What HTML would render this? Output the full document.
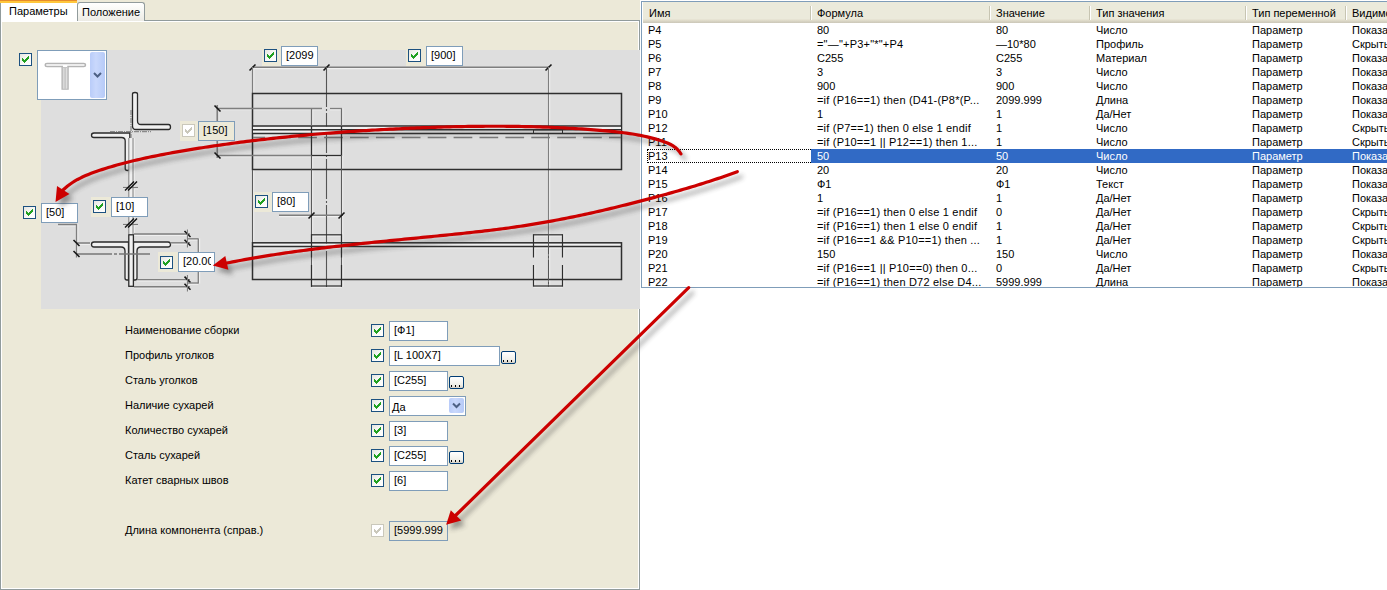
<!DOCTYPE html><html><head><meta charset="utf-8"><style>

html,body{margin:0;padding:0}
body{width:1387px;height:590px;position:relative;overflow:hidden;background:#fff;font-family:"Liberation Sans",sans-serif;font-size:11px;color:#000}
.a{position:absolute}
.t{position:absolute;white-space:nowrap;line-height:14px}
.tb{position:absolute;border:1px solid #7F9DB9;overflow:hidden}
.tb span{position:absolute;white-space:nowrap}

</style></head><body>
<div class="a" style="left:0;top:0;width:640px;height:590px;background:#ECE9D8"></div>
<div class="a" style="left:0;top:20px;width:638px;height:568px;border:1px solid #919B9C"></div>
<div class="a" style="left:1px;top:21px;width:636px;height:566px;border:1px solid #FFFFFF;border-top-color:#FFFFFF"></div>
<div class="a" style="left:77px;top:2px;width:66px;height:18px;border:1px solid #919B9C;border-bottom:none;border-radius:3px 3px 0 0;background:linear-gradient(#FFFFFF,#F6F6F2 50%,#ECEBE5)"></div>
<div class="t" style="left:82px;top:4px;line-height:16px">Положение</div>
<div class="a" style="left:0;top:0;width:77px;height:22px;background:#FFFFFF;border-left:1px solid #919B9C;box-sizing:border-box"></div>
<div class="a" style="left:0;top:0;width:77px;height:1px;background:#E68B2C"></div>
<div class="a" style="left:0;top:1px;width:77px;height:2px;background:#FFC73C"></div>
<div class="t" style="left:9px;top:3px;line-height:16px">Параметры</div>
<div class="a" style="left:41px;top:50px;width:599px;height:259px;background:#DEDEDE"></div>
<svg class="a" style="left:0;top:0" width="1387" height="590"><g opacity="0.75"><line x1="252" y1="68.6" x2="549" y2="68.6" stroke="#F6F6F6" stroke-width="1.2"/><line x1="253.7" y1="67" x2="253.7" y2="93" stroke="#F6F6F6" stroke-width="1.2"/><line x1="549.65" y1="67" x2="549.65" y2="287" stroke="#F6F6F6" stroke-width="1.2"/><line x1="252" y1="127.35" x2="622" y2="127.35" stroke="#F6F6F6" stroke-width="1.2"/><line x1="252" y1="131.15" x2="622" y2="131.15" stroke="#F6F6F6" stroke-width="1.2"/><line x1="252" y1="134.85" x2="622" y2="134.85" stroke="#F6F6F6" stroke-width="1.2"/><line x1="312.70000000000005" y1="108" x2="312.70000000000005" y2="126" stroke="#F6F6F6" stroke-width="1.2"/><line x1="342.70000000000005" y1="108" x2="342.70000000000005" y2="126" stroke="#F6F6F6" stroke-width="1.2"/><line x1="312.75" y1="126" x2="312.75" y2="156" stroke="#F6F6F6" stroke-width="1.2"/><line x1="342.75" y1="126" x2="342.75" y2="156" stroke="#F6F6F6" stroke-width="1.2"/><line x1="311" y1="156.75" x2="342" y2="156.75" stroke="#F6F6F6" stroke-width="1.2"/><line x1="217" y1="109.75" x2="322" y2="109.75" stroke="#F6F6F6" stroke-width="1.2"/><line x1="330" y1="109.75" x2="342" y2="109.75" stroke="#F6F6F6" stroke-width="1.2"/><line x1="217" y1="156.75" x2="311" y2="156.75" stroke="#F6F6F6" stroke-width="1.2"/><line x1="218.75" y1="105" x2="218.75" y2="158" stroke="#F6F6F6" stroke-width="1.2"/><line x1="312.65000000000003" y1="155" x2="312.65000000000003" y2="287" stroke="#F6F6F6" stroke-width="1.2"/><line x1="342.65000000000003" y1="155" x2="342.65000000000003" y2="287" stroke="#F6F6F6" stroke-width="1.2"/><line x1="253.65" y1="170" x2="253.65" y2="243" stroke="#F6F6F6" stroke-width="1.2"/><line x1="252" y1="247.85" x2="622" y2="247.85" stroke="#F6F6F6" stroke-width="1.2"/><line x1="311.5" y1="236.0" x2="341.5" y2="236.0" stroke="#F6F6F6" stroke-width="1.2"/><line x1="311.5" y1="287.20000000000005" x2="341.5" y2="287.20000000000005" stroke="#F6F6F6" stroke-width="1.2"/><line x1="312.70000000000005" y1="234.2" x2="312.70000000000005" y2="257.5" stroke="#F6F6F6" stroke-width="1.2"/><line x1="312.70000000000005" y1="265" x2="312.70000000000005" y2="286.6" stroke="#F6F6F6" stroke-width="1.2"/><line x1="342.70000000000005" y1="234.2" x2="342.70000000000005" y2="257.5" stroke="#F6F6F6" stroke-width="1.2"/><line x1="342.70000000000005" y1="265" x2="342.70000000000005" y2="286.6" stroke="#F6F6F6" stroke-width="1.2"/><line x1="533.5" y1="236.0" x2="562.5" y2="236.0" stroke="#F6F6F6" stroke-width="1.2"/><line x1="533.5" y1="287.20000000000005" x2="562.5" y2="287.20000000000005" stroke="#F6F6F6" stroke-width="1.2"/><line x1="534.7" y1="234.2" x2="534.7" y2="257.5" stroke="#F6F6F6" stroke-width="1.2"/><line x1="534.7" y1="265" x2="534.7" y2="286.6" stroke="#F6F6F6" stroke-width="1.2"/><line x1="563.7" y1="234.2" x2="563.7" y2="257.5" stroke="#F6F6F6" stroke-width="1.2"/><line x1="563.7" y1="265" x2="563.7" y2="286.6" stroke="#F6F6F6" stroke-width="1.2"/><line x1="279" y1="216.70000000000002" x2="343" y2="216.70000000000002" stroke="#F6F6F6" stroke-width="1.2"/><line x1="129.95000000000002" y1="138" x2="129.95000000000002" y2="234" stroke="#F6F6F6" stroke-width="1.2"/><line x1="134.15" y1="138" x2="134.15" y2="234" stroke="#F6F6F6" stroke-width="1.2"/><line x1="123" y1="188.7" x2="138" y2="188.7" stroke="#F6F6F6" stroke-width="1.2"/><line x1="123" y1="225.7" x2="138" y2="225.7" stroke="#F6F6F6" stroke-width="1.2"/><line x1="58" y1="225.85" x2="77" y2="225.85" stroke="#F6F6F6" stroke-width="1.2"/><line x1="77.75" y1="224" x2="77.75" y2="257.5" stroke="#F6F6F6" stroke-width="1.2"/><line x1="76" y1="244.35" x2="90" y2="244.35" stroke="#F6F6F6" stroke-width="1.2"/><line x1="134" y1="235.29999999999998" x2="190" y2="235.29999999999998" stroke="#F6F6F6" stroke-width="1.2"/><line x1="170" y1="244.1" x2="190" y2="244.1" stroke="#F6F6F6" stroke-width="1.2"/><line x1="137" y1="280.90000000000003" x2="190" y2="280.90000000000003" stroke="#F6F6F6" stroke-width="1.2"/><line x1="134" y1="288.0" x2="190" y2="288.0" stroke="#F6F6F6" stroke-width="1.2"/><line x1="187.5" y1="240.05" x2="198.3" y2="240.05" stroke="#F6F6F6" stroke-width="1.2"/><line x1="199.55" y1="238.5" x2="199.55" y2="283.5" stroke="#F6F6F6" stroke-width="1.2"/><line x1="187.5" y1="284.25" x2="198.3" y2="284.25" stroke="#F6F6F6" stroke-width="1.2"/><line x1="188.7" y1="229.5" x2="188.7" y2="247.5" stroke="#F6F6F6" stroke-width="1.2"/><line x1="188.7" y1="275" x2="188.7" y2="291.5" stroke="#F6F6F6" stroke-width="1.2"/></g><line x1="252" y1="67.2" x2="549" y2="67.2" stroke="#7E7E7E" stroke-width="1.6"/><line x1="249.5" y1="70.5" x2="255.5" y2="64.5" stroke="#151515" stroke-width="1.55"/><line x1="323.5" y1="70.5" x2="329.5" y2="64.5" stroke="#151515" stroke-width="1.55"/><line x1="545.5" y1="70.5" x2="551.5" y2="64.5" stroke="#151515" stroke-width="1.55"/><line x1="252.5" y1="67" x2="252.5" y2="93" stroke="#7E7E7E" stroke-width="1.2"/><line x1="548.5" y1="67" x2="548.5" y2="287" stroke="#7E7E7E" stroke-width="1.1"/><line x1="326.5" y1="67" x2="326.5" y2="287" stroke="#555" stroke-width="1.1" stroke-dasharray="40 2 2 2"/><rect x="252.5" y="93.5" width="369" height="76" stroke="#2E2E2E" stroke-width="1.5" fill="none"/><rect x="253" y="126.5" width="368" height="6.5" fill="#F2F2F2"/><line x1="252" y1="126" x2="622" y2="126" stroke="#2E2E2E" stroke-width="1.5"/><line x1="252" y1="129.8" x2="622" y2="129.8" stroke="#2E2E2E" stroke-width="1.5"/><line x1="252" y1="133.5" x2="622" y2="133.5" stroke="#2E2E2E" stroke-width="1.5"/><line x1="253" y1="137.5" x2="621" y2="137.5" stroke="#7A7A7A" stroke-width="1.5" stroke-dasharray="18.7 7.2" stroke-dashoffset="6.6"/><rect x="533.5" y="129.8" width="29" height="3.7" stroke="#2E2E2E" stroke-width="1" fill="none"/><line x1="311.5" y1="108" x2="311.5" y2="126" stroke="#6A6A6A" stroke-width="1.2"/><line x1="341.5" y1="108" x2="341.5" y2="126" stroke="#6A6A6A" stroke-width="1.2"/><line x1="311.5" y1="126" x2="311.5" y2="156" stroke="#2E2E2E" stroke-width="1.3"/><line x1="341.5" y1="126" x2="341.5" y2="156" stroke="#2E2E2E" stroke-width="1.3"/><line x1="311" y1="155.5" x2="342" y2="155.5" stroke="#2E2E2E" stroke-width="1.3"/><line x1="217" y1="108.5" x2="322" y2="108.5" stroke="#7E7E7E" stroke-width="1.3"/><line x1="330" y1="108.5" x2="342" y2="108.5" stroke="#7E7E7E" stroke-width="1.3"/><line x1="217" y1="155.5" x2="311" y2="155.5" stroke="#7E7E7E" stroke-width="1.3"/><line x1="217.3" y1="105" x2="217.3" y2="158" stroke="#7E7E7E" stroke-width="1.7"/><line x1="214.5" y1="105.5" x2="220.5" y2="111.5" stroke="#151515" stroke-width="1.55"/><line x1="214.5" y1="152.5" x2="220.5" y2="158.5" stroke="#151515" stroke-width="1.55"/><line x1="311.5" y1="155" x2="311.5" y2="287" stroke="#5A5A5A" stroke-width="1.1"/><line x1="341.5" y1="155" x2="341.5" y2="287" stroke="#5A5A5A" stroke-width="1.1"/><line x1="252.5" y1="170" x2="252.5" y2="243" stroke="#5A5A5A" stroke-width="1.1"/><rect x="253" y="243.5" width="368" height="2.5" fill="#F2F2F2"/><rect x="252.5" y="242.8" width="369" height="36.7" stroke="#2E2E2E" stroke-width="1.5" fill="none"/><line x1="252" y1="246.5" x2="622" y2="246.5" stroke="#2E2E2E" stroke-width="1.5"/><line x1="311.5" y1="234.8" x2="341.5" y2="234.8" stroke="#2E2E2E" stroke-width="1.2"/><line x1="311.5" y1="286" x2="341.5" y2="286" stroke="#2E2E2E" stroke-width="1.2"/><line x1="311.5" y1="234.2" x2="311.5" y2="257.5" stroke="#2E2E2E" stroke-width="1.2"/><line x1="311.5" y1="265" x2="311.5" y2="286.6" stroke="#2E2E2E" stroke-width="1.2"/><line x1="341.5" y1="234.2" x2="341.5" y2="257.5" stroke="#2E2E2E" stroke-width="1.2"/><line x1="341.5" y1="265" x2="341.5" y2="286.6" stroke="#2E2E2E" stroke-width="1.2"/><line x1="533.5" y1="234.8" x2="562.5" y2="234.8" stroke="#2E2E2E" stroke-width="1.2"/><line x1="533.5" y1="286" x2="562.5" y2="286" stroke="#2E2E2E" stroke-width="1.2"/><line x1="533.5" y1="234.2" x2="533.5" y2="257.5" stroke="#2E2E2E" stroke-width="1.2"/><line x1="533.5" y1="265" x2="533.5" y2="286.6" stroke="#2E2E2E" stroke-width="1.2"/><line x1="562.5" y1="234.2" x2="562.5" y2="257.5" stroke="#2E2E2E" stroke-width="1.2"/><line x1="562.5" y1="265" x2="562.5" y2="286.6" stroke="#2E2E2E" stroke-width="1.2"/><line x1="279" y1="215.3" x2="343" y2="215.3" stroke="#7E7E7E" stroke-width="1.6"/><line x1="308.5" y1="218.5" x2="314.5" y2="212.5" stroke="#151515" stroke-width="1.55"/><line x1="338.5" y1="218.5" x2="344.5" y2="212.5" stroke="#151515" stroke-width="1.55"/><line x1="548.5" y1="234" x2="548.5" y2="287" stroke="#555" stroke-width="1" stroke-dasharray="20 2 2 2"/><path d="M132.5 94 Q132.5 92.5 135 92.5 Q137.5 92.5 137.5 94 L137.5 121 Q137.5 124.5 141 124.5 L168.5 124.5 Q170.5 124.5 170.5 127 Q170.5 129.5 168.5 129.5 L136 129.5 Q132.5 129.5 132.5 126 Z" fill="#F0F0F0" stroke="#2A2A2A" stroke-width="1.3"/><path d="M129.8 133 L129.8 168.5 Q129.8 170.5 127.5 170.5 Q125.2 170.5 125.2 168.5 L125.2 141 Q125.2 137.5 121.5 137.5 L94 137.5 Q91.5 137.5 91.5 135.2 Q91.5 133 94 133 Z" fill="#F0F0F0" stroke="#2A2A2A" stroke-width="1.3"/><line x1="131" y1="110" x2="131" y2="138" stroke="#777" stroke-width="1" stroke-dasharray="5 1 1 1"/><line x1="110" y1="131.7" x2="151" y2="131.7" stroke="#777" stroke-width="1" stroke-dasharray="5 1 1 1"/><rect x="129" y="138" width="4" height="96" fill="#EFEFEF"/><line x1="128.8" y1="138" x2="128.8" y2="234" stroke="#8A8A8A" stroke-width="1.1"/><line x1="133" y1="138" x2="133" y2="234" stroke="#8A8A8A" stroke-width="1.1"/><line x1="123" y1="187.5" x2="138" y2="187.5" stroke="#7A7A7A" stroke-width="1.2"/><line x1="125" y1="190.5" x2="134" y2="181.5" stroke="#111" stroke-width="1.5"/><line x1="128" y1="190.5" x2="137" y2="181.5" stroke="#111" stroke-width="1.5"/><line x1="123" y1="224.5" x2="138" y2="224.5" stroke="#7A7A7A" stroke-width="1.2"/><line x1="125" y1="227.5" x2="134" y2="218.5" stroke="#111" stroke-width="1.5"/><line x1="128" y1="227.5" x2="137" y2="218.5" stroke="#111" stroke-width="1.5"/><path d="M128.5 242 L94 242 Q91.5 242 91.5 244.5 Q91.5 247 94 247 L121 247 Q125 247 125 251 L125 278 Q125 280 127 280 L128.5 280 Z" fill="#F0F0F0" stroke="#2A2A2A" stroke-width="1.3"/><path d="M133.5 242 L168 242 Q170.5 242 170.5 244.5 Q170.5 247 168 247 L141 247 Q137 247 137 251 L137 278 Q137 280 135 280 L133.5 280 Z" fill="#F0F0F0" stroke="#2A2A2A" stroke-width="1.3"/><rect x="128.8" y="234.8" width="4.6" height="51.5" fill="#F0F0F0" stroke="#2A2A2A" stroke-width="1.3"/><line x1="58" y1="224.5" x2="77" y2="224.5" stroke="#7E7E7E" stroke-width="1.5"/><line x1="76.5" y1="224" x2="76.5" y2="257.5" stroke="#7E7E7E" stroke-width="1.3"/><line x1="76" y1="243" x2="90" y2="243" stroke="#7E7E7E" stroke-width="1.5"/><line x1="76" y1="254" x2="150" y2="254" stroke="#777" stroke-width="1.4" stroke-dasharray="36 2 3 2"/><line x1="73.5" y1="240" x2="79.5" y2="246" stroke="#151515" stroke-width="1.55"/><line x1="73.5" y1="251" x2="79.5" y2="257" stroke="#151515" stroke-width="1.55"/><line x1="134" y1="234" x2="190" y2="234" stroke="#7E7E7E" stroke-width="1.4"/><line x1="170" y1="242.8" x2="190" y2="242.8" stroke="#7E7E7E" stroke-width="1.4"/><line x1="137" y1="279.6" x2="190" y2="279.6" stroke="#7E7E7E" stroke-width="1.4"/><line x1="134" y1="286.7" x2="190" y2="286.7" stroke="#7E7E7E" stroke-width="1.4"/><line x1="184.5" y1="231" x2="190.5" y2="237" stroke="#151515" stroke-width="1.55"/><line x1="184.5" y1="239.8" x2="190.5" y2="245.8" stroke="#151515" stroke-width="1.55"/><line x1="184.5" y1="276.6" x2="190.5" y2="282.6" stroke="#151515" stroke-width="1.55"/><line x1="184.5" y1="283.7" x2="190.5" y2="289.7" stroke="#151515" stroke-width="1.55"/><line x1="187.5" y1="238.8" x2="198.3" y2="238.8" stroke="#7E7E7E" stroke-width="1.3"/><line x1="198.3" y1="238.5" x2="198.3" y2="283.5" stroke="#7E7E7E" stroke-width="1.3"/><line x1="187.5" y1="283" x2="198.3" y2="283" stroke="#7E7E7E" stroke-width="1.3"/><line x1="187.5" y1="229.5" x2="187.5" y2="247.5" stroke="#7E7E7E" stroke-width="1.2"/><line x1="187.5" y1="275" x2="187.5" y2="291.5" stroke="#7E7E7E" stroke-width="1.2"/></svg>
<div class="a" style="left:37px;top:50px;width:68px;height:48px;border:1px solid #7F9DB9;background:#fff"></div>
<svg class="a" style="left:37px;top:50px" width="70" height="50"><path d="M10 13.6 Q8.2 13.6 8.2 15.1 Q8.2 16.6 10 16.6 L25.2 16.6 L25.2 39 L31 39 L31 16.6 L46.8 16.6 Q48.5 16.6 48.5 15.1 Q48.5 13.6 46.8 13.6 Z" fill="#FFFFFF" stroke="#B4B4B4" stroke-width="1.5"/><rect x="25.6" y="17" width="5" height="22" fill="#C6C6C6"/><line x1="26.8" y1="18" x2="26.8" y2="38.5" stroke="#E4E4E4" stroke-width="0.9"/><line x1="29.4" y1="18" x2="29.4" y2="38.5" stroke="#E4E4E4" stroke-width="0.9"/></svg>
<div style="position:absolute;left:90px;top:52px;width:15px;height:46px;border-radius:2px;background:linear-gradient(90deg,#B9CCF9,#C9D8FC 40%,#B6CAF7)"><svg width="15" height="46" style="position:absolute;left:0;top:0"><path d="M4.0 21.0 L7.5 24.5 L11.0 21.0" stroke="#4D6185" stroke-width="2" fill="none"/></svg></div>
<div style="position:absolute;left:19px;top:53px;width:11px;height:11px;border:1px solid #1C5180;background:linear-gradient(135deg,#E6E6E0 0%,#F8F8F6 50%,#FFFFFF 100%)"><svg width="11" height="11" style="position:absolute;left:0;top:0" shape-rendering="crispEdges"><path d="M8 2h1v1h-1zM7 3h2v1h-2zM2 4h1v1h-1zM6 4h3v1h-3zM2 5h2v1h-2zM5 5h3v1h-3zM2 6h5v1h-5zM3 7h3v1h-3zM4 8h1v1h-1z" fill="#21A121"/></svg></div>
<div style="position:absolute;left:262px;top:46px;width:19px;height:20px;background:#ECE9D8"></div><div style="position:absolute;left:264px;top:49px;width:11px;height:11px;border:1px solid #1C5180;background:linear-gradient(135deg,#E6E6E0 0%,#F8F8F6 50%,#FFFFFF 100%)"><svg width="11" height="11" style="position:absolute;left:0;top:0" shape-rendering="crispEdges"><path d="M8 2h1v1h-1zM7 3h2v1h-2zM2 4h1v1h-1zM6 4h3v1h-3zM2 5h2v1h-2zM5 5h3v1h-3zM2 6h5v1h-5zM3 7h3v1h-3zM4 8h1v1h-1z" fill="#21A121"/></svg></div>
<div class="tb" style="left:281px;top:46px;width:35px;height:18px;background:#FFFFFF"><div style="position:absolute;left:0;top:0;width:32px;height:18px;overflow:hidden"><span style="left:4px;top:-1px;line-height:18px">[2099</span></div></div>
<div style="position:absolute;left:406px;top:46px;width:20px;height:20px;background:#ECE9D8"></div><div style="position:absolute;left:408px;top:49px;width:11px;height:11px;border:1px solid #1C5180;background:linear-gradient(135deg,#E6E6E0 0%,#F8F8F6 50%,#FFFFFF 100%)"><svg width="11" height="11" style="position:absolute;left:0;top:0" shape-rendering="crispEdges"><path d="M8 2h1v1h-1zM7 3h2v1h-2zM2 4h1v1h-1zM6 4h3v1h-3zM2 5h2v1h-2zM5 5h3v1h-3zM2 6h5v1h-5zM3 7h3v1h-3zM4 8h1v1h-1z" fill="#21A121"/></svg></div>
<div class="tb" style="left:426px;top:46px;width:35px;height:18px;background:#FFFFFF"><div style="position:absolute;left:0;top:0;width:32px;height:18px;overflow:hidden"><span style="left:4px;top:-1px;line-height:18px">[900]</span></div></div>
<div style="position:absolute;left:180px;top:121px;width:18px;height:20px;background:#ECE9D8"></div><div style="position:absolute;left:182px;top:124px;width:11px;height:11px;border:1px solid #CAC8BB;background:#FFFFFF"><svg width="11" height="11" style="position:absolute;left:0;top:0" shape-rendering="crispEdges"><path d="M8 2h1v1h-1zM7 3h2v1h-2zM2 4h1v1h-1zM6 4h3v1h-3zM2 5h2v1h-2zM5 5h3v1h-3zM2 6h5v1h-5zM3 7h3v1h-3zM4 8h1v1h-1z" fill="#CAC8BB"/></svg></div>
<div class="tb" style="left:198px;top:121px;width:35px;height:18px;background:#ECE9D8"><div style="position:absolute;left:0;top:0;width:32px;height:18px;overflow:hidden"><span style="left:4px;top:-1px;line-height:18px">[150]</span></div></div>
<div style="position:absolute;left:23px;top:206px;width:11px;height:11px;border:1px solid #1C5180;background:linear-gradient(135deg,#E6E6E0 0%,#F8F8F6 50%,#FFFFFF 100%)"><svg width="11" height="11" style="position:absolute;left:0;top:0" shape-rendering="crispEdges"><path d="M8 2h1v1h-1zM7 3h2v1h-2zM2 4h1v1h-1zM6 4h3v1h-3zM2 5h2v1h-2zM5 5h3v1h-3zM2 6h5v1h-5zM3 7h3v1h-3zM4 8h1v1h-1z" fill="#21A121"/></svg></div>
<div class="tb" style="left:41px;top:203px;width:35px;height:18px;background:#FFFFFF"><div style="position:absolute;left:0;top:0;width:32px;height:18px;overflow:hidden"><span style="left:4px;top:-1px;line-height:18px">[50]</span></div></div>
<div style="position:absolute;left:91px;top:197px;width:20px;height:20px;background:#ECE9D8"></div><div style="position:absolute;left:93px;top:200px;width:11px;height:11px;border:1px solid #1C5180;background:linear-gradient(135deg,#E6E6E0 0%,#F8F8F6 50%,#FFFFFF 100%)"><svg width="11" height="11" style="position:absolute;left:0;top:0" shape-rendering="crispEdges"><path d="M8 2h1v1h-1zM7 3h2v1h-2zM2 4h1v1h-1zM6 4h3v1h-3zM2 5h2v1h-2zM5 5h3v1h-3zM2 6h5v1h-5zM3 7h3v1h-3zM4 8h1v1h-1z" fill="#21A121"/></svg></div>
<div class="tb" style="left:111px;top:197px;width:35px;height:18px;background:#FFFFFF"><div style="position:absolute;left:0;top:0;width:32px;height:18px;overflow:hidden"><span style="left:4px;top:-1px;line-height:18px">[10]</span></div></div>
<div style="position:absolute;left:254px;top:192px;width:18px;height:20px;background:#ECE9D8"></div><div style="position:absolute;left:255px;top:195px;width:11px;height:11px;border:1px solid #1C5180;background:linear-gradient(135deg,#E6E6E0 0%,#F8F8F6 50%,#FFFFFF 100%)"><svg width="11" height="11" style="position:absolute;left:0;top:0" shape-rendering="crispEdges"><path d="M8 2h1v1h-1zM7 3h2v1h-2zM2 4h1v1h-1zM6 4h3v1h-3zM2 5h2v1h-2zM5 5h3v1h-3zM2 6h5v1h-5zM3 7h3v1h-3zM4 8h1v1h-1z" fill="#21A121"/></svg></div>
<div class="tb" style="left:272px;top:192px;width:35px;height:18px;background:#FFFFFF"><div style="position:absolute;left:0;top:0;width:32px;height:18px;overflow:hidden"><span style="left:4px;top:-1px;line-height:18px">[80]</span></div></div>
<div style="position:absolute;left:158px;top:252px;width:20px;height:20px;background:#ECE9D8"></div><div style="position:absolute;left:160px;top:256px;width:11px;height:11px;border:1px solid #1C5180;background:linear-gradient(135deg,#E6E6E0 0%,#F8F8F6 50%,#FFFFFF 100%)"><svg width="11" height="11" style="position:absolute;left:0;top:0" shape-rendering="crispEdges"><path d="M8 2h1v1h-1zM7 3h2v1h-2zM2 4h1v1h-1zM6 4h3v1h-3zM2 5h2v1h-2zM5 5h3v1h-3zM2 6h5v1h-5zM3 7h3v1h-3zM4 8h1v1h-1z" fill="#21A121"/></svg></div>
<div class="tb" style="left:178px;top:252px;width:35px;height:18px;background:#FFFFFF"><div style="position:absolute;left:0;top:0;width:32px;height:18px;overflow:hidden"><span style="left:4px;top:-1px;line-height:18px">[20.00</span></div></div>
<div class="t" style="left:125px;top:323px">Наименование сборки</div>
<div style="position:absolute;left:371px;top:324px;width:11px;height:11px;border:1px solid #1C5180;background:linear-gradient(135deg,#E6E6E0 0%,#F8F8F6 50%,#FFFFFF 100%)"><svg width="11" height="11" style="position:absolute;left:0;top:0" shape-rendering="crispEdges"><path d="M8 2h1v1h-1zM7 3h2v1h-2zM2 4h1v1h-1zM6 4h3v1h-3zM2 5h2v1h-2zM5 5h3v1h-3zM2 6h5v1h-5zM3 7h3v1h-3zM4 8h1v1h-1z" fill="#21A121"/></svg></div>
<div class="tb" style="left:389px;top:321px;width:57px;height:18px;background:#FFFFFF"><div style="position:absolute;left:0;top:0;width:54px;height:18px;overflow:hidden"><span style="left:4px;top:-1px;line-height:18px">[Ф1]</span></div></div>
<div class="t" style="left:125px;top:348px">Профиль уголков</div>
<div style="position:absolute;left:371px;top:349px;width:11px;height:11px;border:1px solid #1C5180;background:linear-gradient(135deg,#E6E6E0 0%,#F8F8F6 50%,#FFFFFF 100%)"><svg width="11" height="11" style="position:absolute;left:0;top:0" shape-rendering="crispEdges"><path d="M8 2h1v1h-1zM7 3h2v1h-2zM2 4h1v1h-1zM6 4h3v1h-3zM2 5h2v1h-2zM5 5h3v1h-3zM2 6h5v1h-5zM3 7h3v1h-3zM4 8h1v1h-1z" fill="#21A121"/></svg></div>
<div class="tb" style="left:389px;top:346px;width:109px;height:18px;background:#FFFFFF"><div style="position:absolute;left:0;top:0;width:106px;height:18px;overflow:hidden"><span style="left:4px;top:-1px;line-height:18px">[L 100X7]</span></div></div>
<div style="position:absolute;left:501px;top:351px;width:13px;height:11px;border:1px solid #003C74;border-radius:2px;background:linear-gradient(#FFFFFF,#F0F0EA 70%,#D6D0C5)"><svg width="13" height="11" style="position:absolute;left:0;top:0" shape-rendering="crispEdges"><rect x="1" y="8" width="1" height="2" fill="#000"/><rect x="5" y="8" width="1" height="2" fill="#000"/><rect x="9" y="8" width="1" height="2" fill="#000"/></svg></div>
<div class="t" style="left:125px;top:373px">Сталь уголков</div>
<div style="position:absolute;left:371px;top:374px;width:11px;height:11px;border:1px solid #1C5180;background:linear-gradient(135deg,#E6E6E0 0%,#F8F8F6 50%,#FFFFFF 100%)"><svg width="11" height="11" style="position:absolute;left:0;top:0" shape-rendering="crispEdges"><path d="M8 2h1v1h-1zM7 3h2v1h-2zM2 4h1v1h-1zM6 4h3v1h-3zM2 5h2v1h-2zM5 5h3v1h-3zM2 6h5v1h-5zM3 7h3v1h-3zM4 8h1v1h-1z" fill="#21A121"/></svg></div>
<div class="tb" style="left:389px;top:371px;width:57px;height:18px;background:#FFFFFF"><div style="position:absolute;left:0;top:0;width:54px;height:18px;overflow:hidden"><span style="left:4px;top:-1px;line-height:18px">[C255]</span></div></div>
<div style="position:absolute;left:449px;top:376px;width:13px;height:11px;border:1px solid #003C74;border-radius:2px;background:linear-gradient(#FFFFFF,#F0F0EA 70%,#D6D0C5)"><svg width="13" height="11" style="position:absolute;left:0;top:0" shape-rendering="crispEdges"><rect x="1" y="8" width="1" height="2" fill="#000"/><rect x="5" y="8" width="1" height="2" fill="#000"/><rect x="9" y="8" width="1" height="2" fill="#000"/></svg></div>
<div class="t" style="left:125px;top:398px">Наличие сухарей</div>
<div style="position:absolute;left:371px;top:399px;width:11px;height:11px;border:1px solid #1C5180;background:linear-gradient(135deg,#E6E6E0 0%,#F8F8F6 50%,#FFFFFF 100%)"><svg width="11" height="11" style="position:absolute;left:0;top:0" shape-rendering="crispEdges"><path d="M8 2h1v1h-1zM7 3h2v1h-2zM2 4h1v1h-1zM6 4h3v1h-3zM2 5h2v1h-2zM5 5h3v1h-3zM2 6h5v1h-5zM3 7h3v1h-3zM4 8h1v1h-1z" fill="#21A121"/></svg></div>
<div class="tb" style="left:389px;top:396px;width:75px;height:18px;background:#fff"><span style="left:2px;top:1px;line-height:18px">Да</span></div>
<div style="position:absolute;left:449px;top:398px;width:15px;height:15px;border-radius:2px;background:linear-gradient(90deg,#B9CCF9,#C9D8FC 40%,#B6CAF7)"><svg width="15" height="15" style="position:absolute;left:0;top:0"><path d="M4.0 5.5 L7.5 9.0 L11.0 5.5" stroke="#4D6185" stroke-width="2" fill="none"/></svg></div>
<div class="t" style="left:125px;top:423px">Количество сухарей</div>
<div style="position:absolute;left:371px;top:424px;width:11px;height:11px;border:1px solid #1C5180;background:linear-gradient(135deg,#E6E6E0 0%,#F8F8F6 50%,#FFFFFF 100%)"><svg width="11" height="11" style="position:absolute;left:0;top:0" shape-rendering="crispEdges"><path d="M8 2h1v1h-1zM7 3h2v1h-2zM2 4h1v1h-1zM6 4h3v1h-3zM2 5h2v1h-2zM5 5h3v1h-3zM2 6h5v1h-5zM3 7h3v1h-3zM4 8h1v1h-1z" fill="#21A121"/></svg></div>
<div class="tb" style="left:389px;top:421px;width:57px;height:18px;background:#FFFFFF"><div style="position:absolute;left:0;top:0;width:54px;height:18px;overflow:hidden"><span style="left:4px;top:-1px;line-height:18px">[3]</span></div></div>
<div class="t" style="left:125px;top:448px">Сталь сухарей</div>
<div style="position:absolute;left:371px;top:449px;width:11px;height:11px;border:1px solid #1C5180;background:linear-gradient(135deg,#E6E6E0 0%,#F8F8F6 50%,#FFFFFF 100%)"><svg width="11" height="11" style="position:absolute;left:0;top:0" shape-rendering="crispEdges"><path d="M8 2h1v1h-1zM7 3h2v1h-2zM2 4h1v1h-1zM6 4h3v1h-3zM2 5h2v1h-2zM5 5h3v1h-3zM2 6h5v1h-5zM3 7h3v1h-3zM4 8h1v1h-1z" fill="#21A121"/></svg></div>
<div class="tb" style="left:389px;top:446px;width:57px;height:18px;background:#FFFFFF"><div style="position:absolute;left:0;top:0;width:54px;height:18px;overflow:hidden"><span style="left:4px;top:-1px;line-height:18px">[C255]</span></div></div>
<div style="position:absolute;left:449px;top:451px;width:13px;height:11px;border:1px solid #003C74;border-radius:2px;background:linear-gradient(#FFFFFF,#F0F0EA 70%,#D6D0C5)"><svg width="13" height="11" style="position:absolute;left:0;top:0" shape-rendering="crispEdges"><rect x="1" y="8" width="1" height="2" fill="#000"/><rect x="5" y="8" width="1" height="2" fill="#000"/><rect x="9" y="8" width="1" height="2" fill="#000"/></svg></div>
<div class="t" style="left:125px;top:473px">Катет сварных швов</div>
<div style="position:absolute;left:371px;top:474px;width:11px;height:11px;border:1px solid #1C5180;background:linear-gradient(135deg,#E6E6E0 0%,#F8F8F6 50%,#FFFFFF 100%)"><svg width="11" height="11" style="position:absolute;left:0;top:0" shape-rendering="crispEdges"><path d="M8 2h1v1h-1zM7 3h2v1h-2zM2 4h1v1h-1zM6 4h3v1h-3zM2 5h2v1h-2zM5 5h3v1h-3zM2 6h5v1h-5zM3 7h3v1h-3zM4 8h1v1h-1z" fill="#21A121"/></svg></div>
<div class="tb" style="left:389px;top:471px;width:57px;height:18px;background:#FFFFFF"><div style="position:absolute;left:0;top:0;width:54px;height:18px;overflow:hidden"><span style="left:4px;top:-1px;line-height:18px">[6]</span></div></div>
<div class="t" style="left:125px;top:523px">Длина компонента (справ.)</div>
<div style="position:absolute;left:371px;top:524px;width:11px;height:11px;border:1px solid #CAC8BB;background:#FFFFFF"><svg width="11" height="11" style="position:absolute;left:0;top:0" shape-rendering="crispEdges"><path d="M8 2h1v1h-1zM7 3h2v1h-2zM2 4h1v1h-1zM6 4h3v1h-3zM2 5h2v1h-2zM5 5h3v1h-3zM2 6h5v1h-5zM3 7h3v1h-3zM4 8h1v1h-1z" fill="#CAC8BB"/></svg></div>
<div class="tb" style="left:389px;top:521px;width:57px;height:18px;background:#ECE9D8"><div style="position:absolute;left:0;top:0;width:54px;height:18px;overflow:hidden"><span style="left:4px;top:-1px;line-height:18px">[5999.999</span></div></div>
<div class="a" style="left:641px;top:1px;width:760px;height:285px;border:1px solid #7F9DB9;background:#fff;overflow:hidden"></div>
<div class="a" style="left:643px;top:2px;width:750px;height:21px;background:linear-gradient(#EBEADB 0%,#EBEADB 80%,#E2DECD 86%,#D6D2C2 93%,#CBC7B8 100%)"></div>
<div class="a" style="left:810px;top:6px;width:1px;height:14px;background:#C7C5B2"></div><div class="a" style="left:811px;top:6px;width:1px;height:14px;background:#fff"></div>
<div class="a" style="left:989px;top:6px;width:1px;height:14px;background:#C7C5B2"></div><div class="a" style="left:990px;top:6px;width:1px;height:14px;background:#fff"></div>
<div class="a" style="left:1089px;top:6px;width:1px;height:14px;background:#C7C5B2"></div><div class="a" style="left:1090px;top:6px;width:1px;height:14px;background:#fff"></div>
<div class="a" style="left:1245px;top:6px;width:1px;height:14px;background:#C7C5B2"></div><div class="a" style="left:1246px;top:6px;width:1px;height:14px;background:#fff"></div>
<div class="a" style="left:1345px;top:6px;width:1px;height:14px;background:#C7C5B2"></div><div class="a" style="left:1346px;top:6px;width:1px;height:14px;background:#fff"></div>
<div class="t" style="left:649px;top:6px">Имя</div>
<div class="t" style="left:817px;top:6px">Формула</div>
<div class="t" style="left:996px;top:6px">Значение</div>
<div class="t" style="left:1096px;top:6px">Тип значения</div>
<div class="t" style="left:1252px;top:6px">Тип переменной</div>
<div class="t" style="left:1352px;top:6px">Видимость</div>
<div class="a" style="left:642px;top:23px;width:760px;height:264px;overflow:hidden">
<div class="t" style="left:6px;top:0px;color:#000">P4</div>
<div class="t" style="left:175px;top:0px;color:#000">80</div>
<div class="t" style="left:354px;top:0px;color:#000">80</div>
<div class="t" style="left:454px;top:0px;color:#000">Число</div>
<div class="t" style="left:610px;top:0px;color:#000">Параметр</div>
<div class="t" style="left:710px;top:0px;color:#000">Показано</div>
<div class="t" style="left:6px;top:14px;color:#000">P5</div>
<div class="t" style="left:175px;top:14px;color:#000;letter-spacing:0.2px">="—"+P3+"*"+P4</div>
<div class="t" style="left:354px;top:14px;color:#000">—10*80</div>
<div class="t" style="left:454px;top:14px;color:#000">Профиль</div>
<div class="t" style="left:610px;top:14px;color:#000">Параметр</div>
<div class="t" style="left:710px;top:14px;color:#000">Скрытый</div>
<div class="t" style="left:6px;top:28px;color:#000">P6</div>
<div class="t" style="left:175px;top:28px;color:#000">C255</div>
<div class="t" style="left:354px;top:28px;color:#000">C255</div>
<div class="t" style="left:454px;top:28px;color:#000">Материал</div>
<div class="t" style="left:610px;top:28px;color:#000">Параметр</div>
<div class="t" style="left:710px;top:28px;color:#000">Показано</div>
<div class="t" style="left:6px;top:42px;color:#000">P7</div>
<div class="t" style="left:175px;top:42px;color:#000">3</div>
<div class="t" style="left:354px;top:42px;color:#000">3</div>
<div class="t" style="left:454px;top:42px;color:#000">Число</div>
<div class="t" style="left:610px;top:42px;color:#000">Параметр</div>
<div class="t" style="left:710px;top:42px;color:#000">Показано</div>
<div class="t" style="left:6px;top:56px;color:#000">P8</div>
<div class="t" style="left:175px;top:56px;color:#000">900</div>
<div class="t" style="left:354px;top:56px;color:#000">900</div>
<div class="t" style="left:454px;top:56px;color:#000">Число</div>
<div class="t" style="left:610px;top:56px;color:#000">Параметр</div>
<div class="t" style="left:710px;top:56px;color:#000">Показано</div>
<div class="t" style="left:6px;top:70px;color:#000">P9</div>
<div class="t" style="left:175px;top:70px;color:#000;letter-spacing:0.2px">=if (P16==1) then (D41-(P8*(P...</div>
<div class="t" style="left:354px;top:70px;color:#000">2099.999</div>
<div class="t" style="left:454px;top:70px;color:#000">Длина</div>
<div class="t" style="left:610px;top:70px;color:#000">Параметр</div>
<div class="t" style="left:710px;top:70px;color:#000">Показано</div>
<div class="t" style="left:6px;top:84px;color:#000">P10</div>
<div class="t" style="left:175px;top:84px;color:#000">1</div>
<div class="t" style="left:354px;top:84px;color:#000">1</div>
<div class="t" style="left:454px;top:84px;color:#000">Да/Нет</div>
<div class="t" style="left:610px;top:84px;color:#000">Параметр</div>
<div class="t" style="left:710px;top:84px;color:#000">Показано</div>
<div class="t" style="left:6px;top:98px;color:#000">P12</div>
<div class="t" style="left:175px;top:98px;color:#000;letter-spacing:0.2px">=if (P7==1) then 0 else 1 endif</div>
<div class="t" style="left:354px;top:98px;color:#000">1</div>
<div class="t" style="left:454px;top:98px;color:#000">Число</div>
<div class="t" style="left:610px;top:98px;color:#000">Параметр</div>
<div class="t" style="left:710px;top:98px;color:#000">Скрытый</div>
<div class="t" style="left:6px;top:112px;color:#000">P11</div>
<div class="t" style="left:175px;top:112px;color:#000;letter-spacing:0.2px">=if (P10==1 || P12==1) then 1...</div>
<div class="t" style="left:354px;top:112px;color:#000">1</div>
<div class="t" style="left:454px;top:112px;color:#000">Число</div>
<div class="t" style="left:610px;top:112px;color:#000">Параметр</div>
<div class="t" style="left:710px;top:112px;color:#000">Скрытый</div>
<div class="a" style="left:169px;top:126px;width:600px;height:14px;background:#316AC5"></div>
<div class="a" style="left:5px;top:126px;width:163px;height:12px;border:1px dotted #000;border-right:none"></div>
<div class="t" style="left:6px;top:126px;color:#000">P13</div>
<div class="t" style="left:175px;top:126px;color:#fff">50</div>
<div class="t" style="left:354px;top:126px;color:#fff">50</div>
<div class="t" style="left:454px;top:126px;color:#fff">Число</div>
<div class="t" style="left:610px;top:126px;color:#fff">Параметр</div>
<div class="t" style="left:710px;top:126px;color:#fff">Показано</div>
<div class="t" style="left:6px;top:140px;color:#000">P14</div>
<div class="t" style="left:175px;top:140px;color:#000">20</div>
<div class="t" style="left:354px;top:140px;color:#000">20</div>
<div class="t" style="left:454px;top:140px;color:#000">Число</div>
<div class="t" style="left:610px;top:140px;color:#000">Параметр</div>
<div class="t" style="left:710px;top:140px;color:#000">Показано</div>
<div class="t" style="left:6px;top:154px;color:#000">P15</div>
<div class="t" style="left:175px;top:154px;color:#000">Ф1</div>
<div class="t" style="left:354px;top:154px;color:#000">Ф1</div>
<div class="t" style="left:454px;top:154px;color:#000">Текст</div>
<div class="t" style="left:610px;top:154px;color:#000">Параметр</div>
<div class="t" style="left:710px;top:154px;color:#000">Показано</div>
<div class="t" style="left:6px;top:168px;color:#000">P16</div>
<div class="t" style="left:175px;top:168px;color:#000">1</div>
<div class="t" style="left:354px;top:168px;color:#000">1</div>
<div class="t" style="left:454px;top:168px;color:#000">Да/Нет</div>
<div class="t" style="left:610px;top:168px;color:#000">Параметр</div>
<div class="t" style="left:710px;top:168px;color:#000">Показано</div>
<div class="t" style="left:6px;top:182px;color:#000">P17</div>
<div class="t" style="left:175px;top:182px;color:#000;letter-spacing:0.2px">=if (P16==1) then 0 else 1 endif</div>
<div class="t" style="left:354px;top:182px;color:#000">0</div>
<div class="t" style="left:454px;top:182px;color:#000">Да/Нет</div>
<div class="t" style="left:610px;top:182px;color:#000">Параметр</div>
<div class="t" style="left:710px;top:182px;color:#000">Скрытый</div>
<div class="t" style="left:6px;top:196px;color:#000">P18</div>
<div class="t" style="left:175px;top:196px;color:#000;letter-spacing:0.2px">=if (P16==1) then 1 else 0 endif</div>
<div class="t" style="left:354px;top:196px;color:#000">1</div>
<div class="t" style="left:454px;top:196px;color:#000">Да/Нет</div>
<div class="t" style="left:610px;top:196px;color:#000">Параметр</div>
<div class="t" style="left:710px;top:196px;color:#000">Скрытый</div>
<div class="t" style="left:6px;top:210px;color:#000">P19</div>
<div class="t" style="left:175px;top:210px;color:#000;letter-spacing:0.2px">=if (P16==1 &amp;&amp; P10==1) then ...</div>
<div class="t" style="left:354px;top:210px;color:#000">1</div>
<div class="t" style="left:454px;top:210px;color:#000">Да/Нет</div>
<div class="t" style="left:610px;top:210px;color:#000">Параметр</div>
<div class="t" style="left:710px;top:210px;color:#000">Скрытый</div>
<div class="t" style="left:6px;top:224px;color:#000">P20</div>
<div class="t" style="left:175px;top:224px;color:#000">150</div>
<div class="t" style="left:354px;top:224px;color:#000">150</div>
<div class="t" style="left:454px;top:224px;color:#000">Число</div>
<div class="t" style="left:610px;top:224px;color:#000">Параметр</div>
<div class="t" style="left:710px;top:224px;color:#000">Показано</div>
<div class="t" style="left:6px;top:238px;color:#000">P21</div>
<div class="t" style="left:175px;top:238px;color:#000;letter-spacing:0.2px">=if (P16==1 || P10==0) then 0...</div>
<div class="t" style="left:354px;top:238px;color:#000">0</div>
<div class="t" style="left:454px;top:238px;color:#000">Да/Нет</div>
<div class="t" style="left:610px;top:238px;color:#000">Параметр</div>
<div class="t" style="left:710px;top:238px;color:#000">Скрытый</div>
<div class="t" style="left:6px;top:252px;color:#000">P22</div>
<div class="t" style="left:175px;top:252px;color:#000;letter-spacing:0.2px">=if (P16==1) then D72 else D4...</div>
<div class="t" style="left:354px;top:252px;color:#000">5999.999</div>
<div class="t" style="left:454px;top:252px;color:#000">Длина</div>
<div class="t" style="left:610px;top:252px;color:#000">Параметр</div>
<div class="t" style="left:710px;top:252px;color:#000">Показано</div>
</div>
<svg class="a" style="left:0;top:0" width="1387" height="590"><defs><filter id="sh" x="-10%" y="-10%" width="130%" height="130%"><feGaussianBlur stdDeviation="2.5"/></filter></defs><g transform="translate(4,5)" filter="url(#sh)" opacity="0.45"><g style="--x:0"><path d="M680.9 153.88 L679.2 151.38 L677.3 149.21 L675.1 147.31 L672.7 145.67 L670.2 144.24 L667.5 143.00 L664.7 141.90 L661.8 140.91 L658.9 140.00 L656.0 139.15 L653.1 138.35 L650.2 137.60 L647.3 136.89 L644.4 136.24 L641.4 135.63 L638.5 135.05 L635.5 134.52 L632.6 134.03 L629.6 133.56 L626.6 133.13 L623.7 132.73 L620.7 132.36 L617.7 132.01 L614.7 131.68 L611.7 131.37 L608.7 131.08 L605.8 130.81 L602.8 130.55 L599.8 130.30 L596.8 130.06 L593.8 129.82 L590.8 129.60 L587.8 129.38 L584.8 129.17 L581.8 128.97 L578.8 128.77 L575.8 128.59 L572.8 128.41 L569.8 128.24 L566.8 128.08 L563.8 127.92 L560.9 127.77 L557.9 127.63 L554.9 127.50 L551.9 127.37 L548.9 127.25 L545.9 127.14 L542.9 127.04 L539.9 126.94 L536.9 126.85 L533.9 126.76 L530.9 126.68 L527.9 126.61 L524.9 126.55 L521.9 126.49 L518.9 126.44 L515.9 126.39 L512.9 126.35 L509.9 126.32 L506.9 126.29 L503.9 126.27 L500.9 126.26 L497.9 126.25 L494.9 126.24 L491.9 126.25 L488.9 126.25 L485.9 126.27 L482.9 126.29 L479.9 126.31 L476.9 126.34 L473.9 126.38 L470.9 126.42 L468.0 126.46 L465.0 126.51 L462.0 126.57 L459.0 126.63 L456.0 126.69 L453.0 126.76 L450.0 126.84 L447.0 126.92 L444.0 127.00 L441.0 127.09 L438.0 127.18 L435.0 127.28 L432.0 127.38 L429.0 127.48 L426.0 127.59 L423.0 127.70 L420.0 127.82 L417.0 127.94 L414.0 128.07 L411.0 128.20 L408.0 128.33 L405.0 128.46 L402.0 128.60 L399.0 128.74 L396.0 128.89 L393.0 129.04 L390.0 129.19 L387.0 129.35 L384.0 129.51 L381.0 129.67 L378.1 129.84 L375.1 130.01 L372.1 130.18 L369.1 130.36 L366.1 130.54 L363.1 130.73 L360.1 130.91 L357.1 131.11 L354.1 131.31 L351.1 131.51 L348.1 131.71 L345.1 131.92 L342.1 132.14 L339.1 132.35 L336.2 132.58 L333.2 132.80 L330.2 133.03 L327.2 133.27 L324.2 133.51 L321.2 133.75 L318.2 134.00 L315.2 134.25 L312.2 134.51 L309.3 134.77 L306.3 135.04 L303.3 135.31 L300.3 135.59 L297.3 135.87 L294.3 136.16 L291.4 136.45 L288.4 136.75 L285.4 137.05 L282.4 137.36 L279.4 137.67 L276.4 137.98 L273.5 138.31 L270.5 138.63 L267.5 138.97 L264.5 139.31 L261.5 139.65 L258.6 140.00 L255.6 140.35 L252.6 140.71 L249.6 141.08 L246.7 141.45 L243.7 141.83 L240.7 142.21 L237.7 142.60 L234.8 142.99 L231.8 143.39 L228.8 143.80 L225.9 144.21 L222.9 144.63 L219.9 145.05 L217.0 145.48 L214.0 145.92 L211.0 146.36 L208.1 146.81 L205.1 147.26 L202.1 147.73 L199.2 148.19 L196.2 148.67 L193.2 149.15 L190.3 149.63 L187.3 150.13 L184.4 150.63 L181.4 151.13 L178.5 151.65 L175.5 152.17 L172.5 152.70 L169.6 153.23 L166.6 153.78 L163.7 154.33 L160.7 154.90 L157.8 155.48 L154.9 156.06 L151.9 156.66 L149.0 157.28 L146.1 157.90 L143.1 158.55 L140.2 159.20 L137.3 159.87 L134.4 160.56 L131.4 161.27 L128.5 161.99 L125.6 162.73 L122.7 163.49 L119.8 164.27 L116.9 165.07 L114.1 165.89 L111.2 166.73 L108.3 167.59 L105.4 168.48 L102.6 169.39 L99.7 170.33 L96.9 171.29 L94.0 172.28 L91.2 173.32 L88.4 174.41 L85.7 175.56 L82.9 176.78 L80.3 178.08 L77.6 179.46 L75.0 180.94 L72.5 182.52 L70.0 184.21 L67.6 186.02 L65.3 187.97 L63.0 190.05" stroke="#333" stroke-width="3.2" fill="none" stroke-linecap="round" stroke-linejoin="round"/><polygon points="55.5,202 57,186 69.5,194" fill="#333"/><path d="M737.3 171.64 L734.5 172.68 L731.7 173.70 L728.9 174.71 L726.1 175.71 L723.3 176.69 L720.5 177.66 L717.6 178.62 L714.8 179.57 L712.0 180.51 L709.1 181.43 L706.3 182.35 L703.5 183.25 L700.6 184.15 L697.7 185.03 L694.9 185.91 L692.0 186.77 L689.2 187.63 L686.3 188.48 L683.4 189.32 L680.6 190.15 L677.7 190.98 L674.8 191.80 L671.9 192.61 L669.1 193.41 L666.2 194.21 L663.3 195.00 L660.4 195.78 L657.5 196.56 L654.6 197.33 L651.7 198.10 L648.8 198.87 L645.9 199.63 L643.0 200.38 L640.2 201.13 L637.3 201.88 L634.4 202.62 L631.5 203.36 L628.6 204.10 L625.7 204.83 L622.7 205.55 L619.8 206.27 L616.9 206.98 L614.0 207.69 L611.1 208.39 L608.2 209.08 L605.3 209.77 L602.4 210.45 L599.5 211.12 L596.6 211.79 L593.6 212.45 L590.7 213.09 L587.8 213.74 L584.9 214.37 L582.0 215.00 L579.0 215.62 L576.1 216.23 L573.2 216.83 L570.3 217.42 L567.3 218.01 L564.4 218.59 L561.5 219.16 L558.5 219.72 L555.6 220.27 L552.7 220.82 L549.7 221.35 L546.8 221.88 L543.9 222.40 L540.9 222.91 L538.0 223.41 L535.0 223.91 L532.1 224.39 L529.1 224.87 L526.2 225.34 L523.2 225.80 L520.3 226.25 L517.3 226.69 L514.4 227.12 L511.4 227.54 L508.5 227.96 L505.5 228.36 L502.5 228.76 L499.6 229.14 L496.6 229.52 L493.6 229.89 L490.7 230.25 L487.7 230.61 L484.7 230.95 L481.8 231.29 L478.8 231.63 L475.8 231.96 L472.9 232.28 L469.9 232.60 L466.9 232.92 L463.9 233.24 L461.0 233.55 L458.0 233.86 L455.0 234.17 L452.0 234.47 L449.1 234.78 L446.1 235.08 L443.1 235.38 L440.1 235.68 L437.2 235.98 L434.2 236.27 L431.2 236.57 L428.2 236.86 L425.3 237.16 L422.3 237.45 L419.3 237.75 L416.3 238.04 L413.4 238.33 L410.4 238.63 L407.4 238.92 L404.4 239.21 L401.5 239.51 L398.5 239.80 L395.5 240.10 L392.5 240.40 L389.6 240.69 L386.6 240.99 L383.6 241.29 L380.6 241.60 L377.7 241.90 L374.7 242.21 L371.7 242.51 L368.7 242.82 L365.8 243.14 L362.8 243.45 L359.8 243.77 L356.9 244.09 L353.9 244.41 L350.9 244.73 L347.9 245.06 L345.0 245.39 L342.0 245.73 L339.0 246.07 L336.1 246.41 L333.1 246.76 L330.1 247.11 L327.2 247.46 L324.2 247.82 L321.2 248.18 L318.3 248.55 L315.3 248.92 L312.3 249.30 L309.4 249.69 L306.4 250.07 L303.4 250.47 L300.5 250.86 L297.5 251.27 L294.6 251.68 L291.6 252.09 L288.6 252.52 L285.7 252.94 L282.7 253.38 L279.8 253.82 L276.8 254.27 L273.9 254.72 L270.9 255.18 L268.0 255.65 L265.0 256.13 L262.1 256.61 L259.1 257.10 L256.2 257.60 L253.2 258.11 L250.3 258.62 L247.3 259.14 L244.4 259.67 L241.4 260.21 L238.5 260.76 L235.5 261.32 L232.6 261.88 L229.7 262.46 L226.7 263.04" stroke="#333" stroke-width="3.2" fill="none" stroke-linecap="round" stroke-linejoin="round"/><polygon points="212.8,265.4 225.3,255.9 228.4,269.8" fill="#333"/><path d="M688.7 287.6 L455 516" stroke="#333" stroke-width="3.2" fill="none" stroke-linecap="round" stroke-linejoin="round"/><polygon points="446.1,524.8 450.8,510.2 461.3,520.4" fill="#333"/></g></g><path d="M680.9 153.88 L679.2 151.38 L677.3 149.21 L675.1 147.31 L672.7 145.67 L670.2 144.24 L667.5 143.00 L664.7 141.90 L661.8 140.91 L658.9 140.00 L656.0 139.15 L653.1 138.35 L650.2 137.60 L647.3 136.89 L644.4 136.24 L641.4 135.63 L638.5 135.05 L635.5 134.52 L632.6 134.03 L629.6 133.56 L626.6 133.13 L623.7 132.73 L620.7 132.36 L617.7 132.01 L614.7 131.68 L611.7 131.37 L608.7 131.08 L605.8 130.81 L602.8 130.55 L599.8 130.30 L596.8 130.06 L593.8 129.82 L590.8 129.60 L587.8 129.38 L584.8 129.17 L581.8 128.97 L578.8 128.77 L575.8 128.59 L572.8 128.41 L569.8 128.24 L566.8 128.08 L563.8 127.92 L560.9 127.77 L557.9 127.63 L554.9 127.50 L551.9 127.37 L548.9 127.25 L545.9 127.14 L542.9 127.04 L539.9 126.94 L536.9 126.85 L533.9 126.76 L530.9 126.68 L527.9 126.61 L524.9 126.55 L521.9 126.49 L518.9 126.44 L515.9 126.39 L512.9 126.35 L509.9 126.32 L506.9 126.29 L503.9 126.27 L500.9 126.26 L497.9 126.25 L494.9 126.24 L491.9 126.25 L488.9 126.25 L485.9 126.27 L482.9 126.29 L479.9 126.31 L476.9 126.34 L473.9 126.38 L470.9 126.42 L468.0 126.46 L465.0 126.51 L462.0 126.57 L459.0 126.63 L456.0 126.69 L453.0 126.76 L450.0 126.84 L447.0 126.92 L444.0 127.00 L441.0 127.09 L438.0 127.18 L435.0 127.28 L432.0 127.38 L429.0 127.48 L426.0 127.59 L423.0 127.70 L420.0 127.82 L417.0 127.94 L414.0 128.07 L411.0 128.20 L408.0 128.33 L405.0 128.46 L402.0 128.60 L399.0 128.74 L396.0 128.89 L393.0 129.04 L390.0 129.19 L387.0 129.35 L384.0 129.51 L381.0 129.67 L378.1 129.84 L375.1 130.01 L372.1 130.18 L369.1 130.36 L366.1 130.54 L363.1 130.73 L360.1 130.91 L357.1 131.11 L354.1 131.31 L351.1 131.51 L348.1 131.71 L345.1 131.92 L342.1 132.14 L339.1 132.35 L336.2 132.58 L333.2 132.80 L330.2 133.03 L327.2 133.27 L324.2 133.51 L321.2 133.75 L318.2 134.00 L315.2 134.25 L312.2 134.51 L309.3 134.77 L306.3 135.04 L303.3 135.31 L300.3 135.59 L297.3 135.87 L294.3 136.16 L291.4 136.45 L288.4 136.75 L285.4 137.05 L282.4 137.36 L279.4 137.67 L276.4 137.98 L273.5 138.31 L270.5 138.63 L267.5 138.97 L264.5 139.31 L261.5 139.65 L258.6 140.00 L255.6 140.35 L252.6 140.71 L249.6 141.08 L246.7 141.45 L243.7 141.83 L240.7 142.21 L237.7 142.60 L234.8 142.99 L231.8 143.39 L228.8 143.80 L225.9 144.21 L222.9 144.63 L219.9 145.05 L217.0 145.48 L214.0 145.92 L211.0 146.36 L208.1 146.81 L205.1 147.26 L202.1 147.73 L199.2 148.19 L196.2 148.67 L193.2 149.15 L190.3 149.63 L187.3 150.13 L184.4 150.63 L181.4 151.13 L178.5 151.65 L175.5 152.17 L172.5 152.70 L169.6 153.23 L166.6 153.78 L163.7 154.33 L160.7 154.90 L157.8 155.48 L154.9 156.06 L151.9 156.66 L149.0 157.28 L146.1 157.90 L143.1 158.55 L140.2 159.20 L137.3 159.87 L134.4 160.56 L131.4 161.27 L128.5 161.99 L125.6 162.73 L122.7 163.49 L119.8 164.27 L116.9 165.07 L114.1 165.89 L111.2 166.73 L108.3 167.59 L105.4 168.48 L102.6 169.39 L99.7 170.33 L96.9 171.29 L94.0 172.28 L91.2 173.32 L88.4 174.41 L85.7 175.56 L82.9 176.78 L80.3 178.08 L77.6 179.46 L75.0 180.94 L72.5 182.52 L70.0 184.21 L67.6 186.02 L65.3 187.97 L63.0 190.05" stroke="#CC0000" stroke-width="3.2" fill="none" stroke-linecap="round" stroke-linejoin="round"/><polygon points="55.5,202 57,186 69.5,194" fill="#CC0000"/><path d="M737.3 171.64 L734.5 172.68 L731.7 173.70 L728.9 174.71 L726.1 175.71 L723.3 176.69 L720.5 177.66 L717.6 178.62 L714.8 179.57 L712.0 180.51 L709.1 181.43 L706.3 182.35 L703.5 183.25 L700.6 184.15 L697.7 185.03 L694.9 185.91 L692.0 186.77 L689.2 187.63 L686.3 188.48 L683.4 189.32 L680.6 190.15 L677.7 190.98 L674.8 191.80 L671.9 192.61 L669.1 193.41 L666.2 194.21 L663.3 195.00 L660.4 195.78 L657.5 196.56 L654.6 197.33 L651.7 198.10 L648.8 198.87 L645.9 199.63 L643.0 200.38 L640.2 201.13 L637.3 201.88 L634.4 202.62 L631.5 203.36 L628.6 204.10 L625.7 204.83 L622.7 205.55 L619.8 206.27 L616.9 206.98 L614.0 207.69 L611.1 208.39 L608.2 209.08 L605.3 209.77 L602.4 210.45 L599.5 211.12 L596.6 211.79 L593.6 212.45 L590.7 213.09 L587.8 213.74 L584.9 214.37 L582.0 215.00 L579.0 215.62 L576.1 216.23 L573.2 216.83 L570.3 217.42 L567.3 218.01 L564.4 218.59 L561.5 219.16 L558.5 219.72 L555.6 220.27 L552.7 220.82 L549.7 221.35 L546.8 221.88 L543.9 222.40 L540.9 222.91 L538.0 223.41 L535.0 223.91 L532.1 224.39 L529.1 224.87 L526.2 225.34 L523.2 225.80 L520.3 226.25 L517.3 226.69 L514.4 227.12 L511.4 227.54 L508.5 227.96 L505.5 228.36 L502.5 228.76 L499.6 229.14 L496.6 229.52 L493.6 229.89 L490.7 230.25 L487.7 230.61 L484.7 230.95 L481.8 231.29 L478.8 231.63 L475.8 231.96 L472.9 232.28 L469.9 232.60 L466.9 232.92 L463.9 233.24 L461.0 233.55 L458.0 233.86 L455.0 234.17 L452.0 234.47 L449.1 234.78 L446.1 235.08 L443.1 235.38 L440.1 235.68 L437.2 235.98 L434.2 236.27 L431.2 236.57 L428.2 236.86 L425.3 237.16 L422.3 237.45 L419.3 237.75 L416.3 238.04 L413.4 238.33 L410.4 238.63 L407.4 238.92 L404.4 239.21 L401.5 239.51 L398.5 239.80 L395.5 240.10 L392.5 240.40 L389.6 240.69 L386.6 240.99 L383.6 241.29 L380.6 241.60 L377.7 241.90 L374.7 242.21 L371.7 242.51 L368.7 242.82 L365.8 243.14 L362.8 243.45 L359.8 243.77 L356.9 244.09 L353.9 244.41 L350.9 244.73 L347.9 245.06 L345.0 245.39 L342.0 245.73 L339.0 246.07 L336.1 246.41 L333.1 246.76 L330.1 247.11 L327.2 247.46 L324.2 247.82 L321.2 248.18 L318.3 248.55 L315.3 248.92 L312.3 249.30 L309.4 249.69 L306.4 250.07 L303.4 250.47 L300.5 250.86 L297.5 251.27 L294.6 251.68 L291.6 252.09 L288.6 252.52 L285.7 252.94 L282.7 253.38 L279.8 253.82 L276.8 254.27 L273.9 254.72 L270.9 255.18 L268.0 255.65 L265.0 256.13 L262.1 256.61 L259.1 257.10 L256.2 257.60 L253.2 258.11 L250.3 258.62 L247.3 259.14 L244.4 259.67 L241.4 260.21 L238.5 260.76 L235.5 261.32 L232.6 261.88 L229.7 262.46 L226.7 263.04" stroke="#CC0000" stroke-width="3.2" fill="none" stroke-linecap="round" stroke-linejoin="round"/><polygon points="212.8,265.4 225.3,255.9 228.4,269.8" fill="#CC0000"/><path d="M688.7 287.6 L455 516" stroke="#CC0000" stroke-width="3.2" fill="none" stroke-linecap="round" stroke-linejoin="round"/><polygon points="446.1,524.8 450.8,510.2 461.3,520.4" fill="#CC0000"/></svg>
</body></html>
